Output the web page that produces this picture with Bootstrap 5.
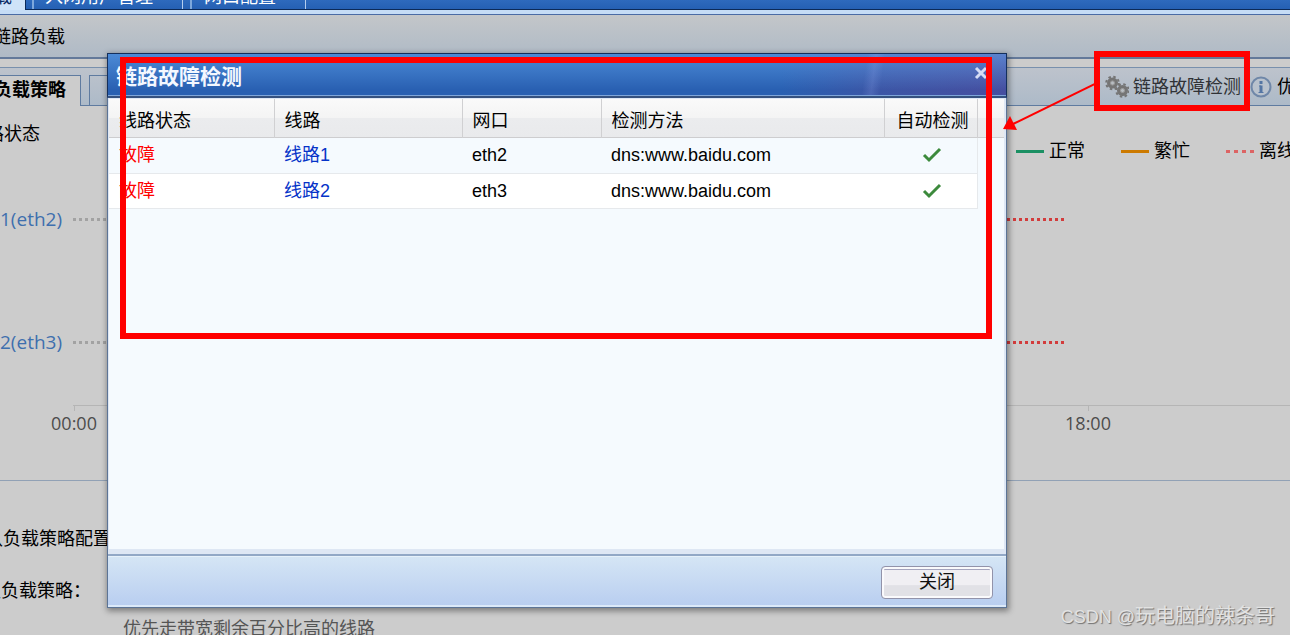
<!DOCTYPE html>
<html lang="zh-CN">
<head>
<meta charset="utf-8">
<meta name="viewport" content="width=device-width, initial-scale=1">
<title>链路负载</title>
<link href="https://cdn.jsdelivr.net/npm/bootstrap@5.3.0/dist/css/bootstrap.min.css" rel="stylesheet">
<style>
  body { font: 18px/28px "Liberation Sans", "Noto Sans CJK SC", sans-serif; color: #000; background: #ccc; }
  .page { min-height: 100vh; }
  a { text-decoration: none; }

  /* top navigation, scrolled partly out of view */
  .topnav { height: 10px; background: linear-gradient(#2e6abd, #2560b3); border-bottom: 1px solid #0c2a58; }
  .topnav a { height: 9px; line-height: 28px; color: #fff; border-right: 1px solid #b4cdee; }
  .topnav a span { display: block; margin-top: -17px; }
  .topnav .current { width: 26px; height: 10px; background: #cfe3f8; color: #0b2a63; border-right: 1px solid #0c2a58; }
  .topnav .current span { margin-left: -6px; }
  .topnav .tab-users { margin-left: 6px; padding-left: 11px; width: 151px; border-left: 2px solid #7ea8dc; }
  .topnav .tab-ports { margin-left: 7px; padding-left: 12px; width: 116px; border-left: 2px solid #7ea8dc; }
  .strip { height: 5px; background: #c5dcf6; border-bottom: 1px solid #4a6ba5; }
  .crumb { height: 44px; padding-top: 2px; background: linear-gradient(#c3c6c9, #afbac6); border-bottom: 2px solid #63799a; }
  .crumb span { margin-left: -7px; }

  /* toolbar with inner tabs */
  .tools { height: 39px; margin-top: 8px; background: linear-gradient(#bdc3cc, #adbac8); border-top: 1px solid #7890ad; border-bottom: 1px solid #5f7ba0; }
  .tab-on { width: 81px; height: 31px; margin-bottom: -1px; background: #ccc; border: solid #5f7ba0; border-width: 1px 1px 0 0; line-height: 28px; }
  .tab-on span { margin-left: -6px; }
  .tab-off { width: 120px; height: 30px; margin-left: 8px; border: solid #5f7ba0; border-width: 1px 1px 0 1px; }
  .check-link { color: #303236; }
  .right-tools { margin-right: -5px; }
  .callout { left: -11px; top: -22px; width: 156px; height: 60px; border: 6px solid #f00; z-index: 30; pointer-events: none; }
  .callout svg { position: absolute; right: 149px; top: 20px; }

  /* link status chart */
  .status-title { margin: 14px 0 0 -14px; }
  .legend { gap: 36px; margin: 31px -5px 0 0; }
  .legend > span { gap: 5px; }
  .key { width: 28px; height: 3px; }
  .key-ok { background: #1b9063; }
  .key-busy { background: #cc7a00; }
  .dots-red { background: repeating-linear-gradient(90deg, #d23c3c 0 3px, transparent 3px 6px); }
  .dots-gray { background: repeating-linear-gradient(90deg, #a2a2a2 0 3px, transparent 3px 6px); }
  .key-off { background: repeating-linear-gradient(90deg, #dc6464 0 4px, transparent 4px 8px); }
  .seg { font-family: "Open Sans", "Noto Sans", sans-serif; }
  .chart-row { height: 28px; padding-right: 226px; font-size: 19px; }
  .chart-row a { width: 73px; color: #3e6fae; }
  .chart-row i { height: 3px; }
  .row-a { margin-top: 40px; }
  .row-b { margin-top: 95px; }
  .axis { margin: 49px 0 0 73px; border-top: 1px solid #b5b5b5; color: #4c4c4c; line-height: 24px; }
  .axis > span { width: 50px; margin-left: -24px; }
  .axis > span + span { margin: 0 177px 0 0; }
  .axis > span::before { content: ""; display: block; width: 1px; height: 5px; margin: 0 auto; background: #b5b5b5; }
  .policy { margin-top: 45px; padding-top: 44px; border-top: 1px solid #91a1b5; }
  .policy h2 { font: inherit; margin: 0 0 24px -15px; }
  .policy .name { margin-left: -17px; }
  .policy .choice { margin: 10px 0 0 123px; color: #555; }

  /* dialog */
  .stage { padding: 53px 283px 0 107px; z-index: 10; }
  .dialog { border: 1px solid #5c7496; box-shadow: 1px 2px 6px 1px rgba(0,0,0,.4); background: #f5fafe; }
  .dialog-head { height: 45px; margin: -1px -1px 0; padding: 3px 18px 4px 8px; color: #f4f8ff; border: 1px solid #142f5c; border-bottom: 2px solid #35517f; box-shadow: inset 0 -1px 0 #7fa6da;
    background: linear-gradient(98deg, transparent 0 84%, rgba(150,170,240,.2) 85%, transparent 86%), linear-gradient(rgba(110,180,250,.5), transparent 85%), linear-gradient(90deg, #2960b2 0 75%, #3c56a6 86%, #464fa0); }
  .dialog-head h1 { font: bold 21px/34px "Noto Sans CJK SC", sans-serif; }
  .dialog-head button { color: #d5dcf5; background: none; line-height: 1; }
  .dialog-main { height: 456px; border: solid #dee7f4; border-width: 1px 2px 5px 1px;
    background: linear-gradient(#fafafa, #f4f4f4 48%, #ebecee 50%, #e9eaec 97%, #cdcdcf 98%) 0 0 / 100% 39px no-repeat; }
  .lines { width: calc(100% - 26px); table-layout: fixed; }
  .lines th, .lines td { font-weight: 400; padding: 0 0 0 10px; }
  .lines th { height: 39px; padding-top: 5px; border-right: 1px solid #d0d0d2; }
  .lines td { height: 35px; border-bottom: 1px solid #e6e9ec; }
  .lines td:last-child { border-right: 1px solid #e6e9ec; }
  .lines th:last-child, .lines td:last-child { padding-left: 3px; }
  .lines tr:nth-child(2) td { background: #fff; }
  .lines svg { display: block; margin: 0 auto; }
  .lines a { color: #0533c8; }
  .lines .fault { color: #f00; }
  .col-a { width: 165px; } .col-b { width: 188px; } .col-c { width: 139px; } .col-e { width: 93px; }
  .dialog-foot { height: 53px; padding: 1px 13px 0 0; background: linear-gradient(#d5e6f5, #b8cdf0); border-top: 2px solid #92a8c6; box-shadow: inset 0 1px #e6f1fa, inset 0 -2px #dbe9f9; }
  .close-btn { width: 112px; height: 33px; color: #111; line-height: 29px; padding: 0; border: 1px solid #9293aa; border-radius: 4px; background: linear-gradient(#f0eff3 58%, #e1e1e6 60%); box-shadow: inset 0 0 0 2px #fafafc, inset 0 4px 0 -1px #a5a5be; }
  .marker { left: 12px; right: 14px; top: 3px; height: 282px; border: 6px solid #f00; pointer-events: none; }
  .watermark { right: 15px; bottom: 12px; font: 20px/28px "Noto Sans CJK SC", sans-serif; color: #e2e2e2; text-shadow: 1px 1px 1px #707070; }
  .watermark span { font: 18px/28px "Liberation Sans", sans-serif; }
</style>
</head>
<body>
<div class="page position-relative overflow-hidden">
  <nav class="topnav d-flex text-nowrap">
    <a class="current overflow-hidden" href="#"><span>载</span></a>
    <a class="tab-users overflow-hidden" href="#"><span>入网用户管理</span></a>
    <a class="tab-ports overflow-hidden" href="#"><span>网口配置</span></a>
  </nav>
  <div class="strip"></div>
  <div class="crumb d-flex align-items-center"><span>链路负载</span></div>

  <div class="tools d-flex align-items-end">
    <div class="tab-on fw-bold text-nowrap"><span>负载策略</span></div>
    <div class="tab-off"></div>
    <div class="right-tools d-flex align-items-center align-self-center ms-auto text-nowrap">
      <div class="position-relative">
        <a class="check-link d-flex align-items-center" href="#">
          <svg class="me-1" width="24" height="24" viewBox="0 0 24 24" aria-hidden="true">
            <g fill="#858585" stroke="#757575">
              <circle cx="7.500" cy="8" r="4" stroke-width="3"/>
              <circle cx="7.500" cy="8" r="6.300" fill="none" stroke-width="2" stroke-dasharray="2.500 2.450"/>
              <circle cx="7.500" cy="8" r="2" fill="#b8bdc2" stroke="#999"/>
              <circle cx="17.500" cy="15.500" r="4" stroke-width="3"/>
              <circle cx="17.500" cy="15.500" r="6.300" fill="none" stroke-width="2" stroke-dasharray="2.500 2.450"/>
              <circle cx="17.500" cy="15.500" r="2" fill="#b8bdc2" stroke="#999"/>
            </g>
          </svg>
          <span>链路故障检测</span>
        </a>
        <div class="callout position-absolute">
          <svg width="92" height="54" viewBox="0 0 92 54" aria-hidden="true">
            <path d="M92 7L10 47" stroke="#f00" stroke-width="2"/>
            <path d="M0 52L7 39L14 53Z" fill="#f00"/>
          </svg>
        </div>
      </div>
      <svg class="ms-2 me-1" width="24" height="24" viewBox="0 0 24 24" aria-hidden="true">
        <circle cx="12" cy="12" r="9.500" fill="#b9c2cd" stroke="#6f87a8" stroke-width="2"/>
        <path d="M12 6v3M12 10.500v7.500" stroke="#5576a4" stroke-width="3" fill="none"/>
        <path d="M10 11h2M9.500 17.500h5" stroke="#5576a4" stroke-width="1" fill="none"/>
      </svg>
      <span>优</span>
    </div>
  </div>

  <div class="d-flex justify-content-between align-items-start text-nowrap">
    <div class="status-title">路状态</div>
    <div class="legend d-flex">
      <span class="d-flex align-items-center"><i class="key key-ok"></i>正常</span>
      <span class="d-flex align-items-center"><i class="key key-busy"></i>繁忙</span>
      <span class="d-flex align-items-center"><i class="key key-off"></i>离线</span>
    </div>
  </div>

  <div class="chart-row row-a seg d-flex align-items-center">
    <a href="#">1(eth2)</a><i class="dots-gray flex-fill"></i><i class="dots-red flex-fill"></i>
  </div>
  <div class="chart-row row-b seg d-flex align-items-center">
    <a href="#">2(eth3)</a><i class="dots-gray flex-fill"></i><i class="dots-red flex-fill"></i>
  </div>
  <div class="axis seg d-flex justify-content-between text-center"><span>00:00</span><span>18:00</span></div>

  <section class="policy text-nowrap">
    <h2>认负载策略配置</h2>
    <div class="name">认负载策略：</div>
    <div class="choice">优先走带宽剩余百分比高的线路</div>
  </section>

  <div class="stage position-absolute top-0 start-0 w-100">
    <div class="dialog position-relative" role="dialog" aria-labelledby="dialog-title">
      <div class="dialog-head d-flex justify-content-between align-items-center">
        <h1 class="m-0" id="dialog-title">链路故障检测</h1>
        <button class="border-0 p-0" type="button" aria-label="关闭窗口">
          <svg class="d-block" width="14" height="22" viewBox="0 0 14 22" aria-hidden="true"><path d="M2 4l10 10M12 4L2 14" stroke="currentColor" stroke-width="3"/></svg>
        </button>
      </div>
      <div class="dialog-main">
        <table class="lines">
          <colgroup><col class="col-a"><col class="col-b"><col class="col-c"><col><col class="col-e"></colgroup>
          <thead><tr><th>线路状态</th><th>线路</th><th>网口</th><th>检测方法</th><th class="text-center">自动检测</th></tr></thead>
          <tbody>
            <tr><td class="fault">故障</td><td><a href="#">线路1</a></td><td>eth2</td><td>dns:www.baidu.com</td>
              <td><svg width="20" height="18" viewBox="0 0 20 18" role="img" aria-label="已启用"><path d="M2 9l5 5L18 3" fill="none" stroke="#3c8a3c" stroke-width="3"/></svg></td></tr>
            <tr><td class="fault">故障</td><td><a href="#">线路2</a></td><td>eth3</td><td>dns:www.baidu.com</td>
              <td><svg width="20" height="18" viewBox="0 0 20 18" role="img" aria-label="已启用"><path d="M2 9l5 5L18 3" fill="none" stroke="#3c8a3c" stroke-width="3"/></svg></td></tr>
          </tbody>
        </table>
      </div>
      <div class="dialog-foot d-flex align-items-center justify-content-end">
        <button class="close-btn" type="button">关闭</button>
      </div>
      <div class="marker position-absolute"></div>
    </div>
  </div>

  <div class="watermark position-absolute"><span>CSDN @</span>玩电脑的辣条哥</div>
</div>
<script src="https://cdn.jsdelivr.net/npm/bootstrap@5.3.0/dist/js/bootstrap.bundle.min.js"></script>
</body>
</html>
